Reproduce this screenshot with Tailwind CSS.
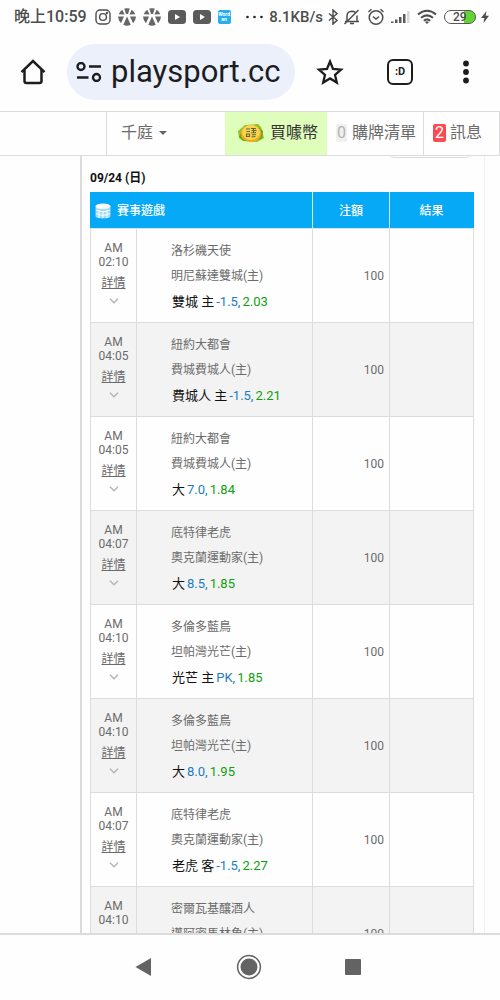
<!DOCTYPE html>
<html lang="zh-Hant">
  <head>
    <meta charset="UTF-8" />
    <meta name="viewport" content="width=device-width, initial-scale=1.0" />
    <title>playsport.cc</title>
    <script src="https://cdn.jsdelivr.net/npm/@tailwindcss/browser@4"></script>
  </head>
  <body
    class="flex flex-col h-screen overflow-hidden bg-[#fefefe] font-[Roboto,'Noto_Sans_CJK_TC',sans-serif] text-[#6b6b6b]"
  >
    <!-- Status bar -->
    <div class="flex items-center justify-between h-9 shrink-0 pl-[14px] pr-[11px] pb-[2px] text-[#4d4d4d] font-medium">
      <div class="flex items-center gap-[7px]">
        <span class="text-base leading-5">晚上10:59</span>
        <svg class="w-4 h-4 ml-px" viewBox="0 0 16 16" fill="none" stroke="currentColor" stroke-width="1.4">
          <rect x="1" y="1" width="14" height="14" rx="4" />
          <circle cx="8" cy="8" r="3.4" />
          <circle cx="12" cy="4" r="0.5" fill="currentColor" />
        </svg>
        <svg class="w-[18px] h-[18px]" viewBox="0 0 18 18" fill="#666">
          <path d="M6.2 .6Q9 -.2 11.800 .6L10 6H8zM4.300 1.700L6.600 6.400L.7 6.300Q1.800 3.300 4.300 1.700zM13.700 1.700L11.400 6.400L17.300 6.300Q16.200 3.300 13.700 1.700zM0 8.400L6 8.400L3 15.200Q.2 12.500 0 8.400zM18 8.400L12 8.400L15 15.200Q17.800 12.500 18 8.400zM9 8.400L12.700 16.800Q9 18.600 5.300 16.800z" />
        </svg>
        <svg class="w-[18px] h-[18px]" viewBox="0 0 18 18" fill="#666">
          <path d="M6.2 .6Q9 -.2 11.800 .6L10 6H8zM4.300 1.700L6.600 6.400L.7 6.300Q1.800 3.300 4.300 1.700zM13.700 1.700L11.400 6.400L17.300 6.300Q16.200 3.300 13.700 1.700zM0 8.400L6 8.400L3 15.200Q.2 12.500 0 8.400zM18 8.400L12 8.400L15 15.200Q17.800 12.500 18 8.400zM9 8.400L12.700 16.800Q9 18.600 5.300 16.800z" />
        </svg>
        <svg class="w-[18px] h-[14px]" viewBox="0 0 18 14">
          <rect width="18" height="14" rx="3.500" fill="#5b5b5b" />
          <path d="M7 4L12 7L7 10z" fill="#fff" />
        </svg>
        <svg class="w-[18px] h-[14px]" viewBox="0 0 18 14">
          <rect width="18" height="14" rx="3.500" fill="#5b5b5b" />
          <path d="M7 4L12 7L7 10z" fill="#fff" />
        </svg>
        <span class="flex flex-col items-center justify-center w-[13px] h-[14px] rounded-xs bg-[#28aef0] text-white text-[5px] leading-[5px] font-bold">
          <span>Word</span><span>an</span>
        </span>
      </div>
      <div class="flex items-center gap-[5px]">
        <svg class="w-[18px] h-4" viewBox="0 0 18 16" fill="#222">
          <circle cx="1.500" cy="8" r="1.300" /><circle cx="8.500" cy="8" r="1.300" /><circle cx="15.500" cy="8" r="1.300" />
        </svg>
        <span class="text-[15px] leading-5">8.1KB/s</span>
        <svg class="w-[10px] h-4" viewBox="0 0 10 16" fill="none" stroke="currentColor" stroke-width="1.500">
          <path d="M1 4.500L9 11.300L5 15V1L9 4.700L1 11.500" />
        </svg>
        <svg class="w-[18px] h-4" viewBox="0 0 18 16" fill="none" stroke="currentColor" stroke-width="1.500">
          <path d="M2 12.500H16M4 12V7Q4 2.500 9 2.300Q11 2.300 12.300 3.500M14 6.500V12M7 14.500H11M1.500 15L15.500 1" />
        </svg>
        <svg class="w-[18px] h-[18px] ml-px" viewBox="0 0 18 18" fill="none" stroke="currentColor" stroke-width="1.500">
          <circle cx="9" cy="9.500" r="6.800" />
          <path d="M6 8.500L9 11L12 8.500M1.500 4L4.500 1.300M16.500 4L13.500 1.300" />
        </svg>
        <svg class="w-[20px] h-4" viewBox="0 0 20 16">
          <path d="M1 14V12.500H3.500V14zM5 14V10.500H7.500V14zM9 14V8H11.500V14zM13 14V5H15.500V14z" fill="#5a5a5a" />
          <path d="M17 14V2H19.500V14z" fill="#d8d8d8" />
        </svg>
        <svg class="w-[20px] h-4 ml-[2px]" viewBox="0 0 20 16" fill="none" stroke="currentColor" stroke-width="2">
          <path d="M1 5.500Q10 -2 19 5.500M4 8.700Q10 4 16 8.700M6.800 11.700Q10 9.300 13.200 11.700" />
          <path d="M8 13L10 15L12 13Q10 11.500 8 13z" fill="currentColor" stroke="none" />
        </svg>
        <span class="flex items-center w-8 h-[14px] ml-[2px] rounded-full border border-[#555] bg-linear-to-r from-[#fefefe] from-65% to-[#5fd635] to-65% pl-2 text-xs leading-3">29</span>
        <svg class="w-2 h-4" viewBox="0 0 8 16" fill="currentColor">
          <path d="M5.500 2L0 9H3.300L2.500 14L8 6.800H4.700z" />
        </svg>
      </div>
    </div>

    <!-- Browser toolbar -->
    <div class="flex items-center h-[75px] shrink-0 pl-5 pr-[21px] pb-[3px] text-[#1d1d1f]">
      <button type="button" aria-label="Home" class="shrink-0">
        <svg class="block w-[26px] h-[26px]" viewBox="0 0 26 26" fill="none" stroke="currentColor" stroke-width="2.500">
          <path d="M1.500 13.200L13 2L24.500 13.200" />
          <path d="M4.500 11V22Q4.500 24 6.500 24H19.500Q21.500 24 21.500 22V11" />
        </svg>
      </button>
      <div class="flex items-center grow min-w-0 h-14 ml-[21px] mr-[21px] pl-[9px] pr-2 gap-[9px] rounded-full bg-[#ebf0fa]">
        <svg class="w-[26px] h-5 shrink-0" viewBox="0 0 26 20" fill="none" stroke="currentColor" stroke-width="2.400">
          <circle cx="5" cy="4.500" r="3.500" /><circle cx="20.500" cy="15.500" r="3.500" />
          <path d="M13 4.500H25M1 15.500H12.500" />
        </svg>
        <input
          type="text"
          aria-label="Address"
          value="playsport.cc"
          readonly
          class="w-full min-w-0 text-[31px] leading-10 outline-none"
        />
      </div>
      <button type="button" aria-label="Bookmark" class="shrink-0">
        <svg class="block w-7 h-[26px]" viewBox="0 0 28 26" fill="none" stroke="currentColor" stroke-width="2.300">
          <path d="M14 2.500L17 9.900L25 10.600L19 15.800L20.800 23.500L14 19.400L7.200 23.500L9 15.800L3 10.600L11 9.900z" />
        </svg>
      </button>
      <button
        type="button"
        aria-label="Tabs"
        class="shrink-0 w-[26px] h-[26px] ml-[43px] rounded-md border-2 border-current text-[11px] leading-5 font-bold"
      >
        :D
      </button>
      <button type="button" aria-label="Menu" class="shrink-0 ml-10">
        <svg class="block w-[26px] h-6" viewBox="0 0 26 24" fill="currentColor">
          <circle cx="13" cy="3.500" r="2.900" /><circle cx="13" cy="12" r="2.900" /><circle cx="13" cy="20.500" r="2.900" />
        </svg>
      </button>
    </div>

    <!-- Site navigation -->
    <nav class="flex h-[45px] shrink-0 border-y border-[#dcdcdc] pb-[2px] text-base leading-6">
      <a href="#" aria-label="首頁" class="w-[107px] -mb-[2px] border-r border-[#dcdcdc]"></a>
      <button type="button" class="flex items-center grow gap-[6px] pl-[14px]">
        千庭
        <svg class="w-2 h-1" viewBox="0 0 8 4" fill="#666"><path d="M0 0H8L4 4z" /></svg>
      </button>
      <a href="#" class="flex items-center gap-[5px] -mb-[2px] pb-[2px] pl-3 pr-[9px] bg-[#dffdbb] text-[#333]">
        <svg class="w-7 h-5" viewBox="0 0 28 20">
          <path d="M1 8L8 2L21 1L24 4L27 15L20 19L6 18L2 15z" fill="#8ac926" />
          <path d="M2 14L7 18L12 18L4 10zM20 3L26 8L25 15L22 17z" fill="#5fa514" />
          <ellipse cx="14" cy="10.500" rx="10.500" ry="8.500" fill="#f1a81d" />
          <ellipse cx="14" cy="9.500" rx="9" ry="7.500" fill="#fbd354" />
          <path d="M9 6H13M9.500 8.500H13M9 11H12.500V13.500H9.500V11M14 5.500H19M14.500 7.500H19.500M16.500 5V10M14 10L19 9.500M15 12L19 11.500M14.500 14L18.500 13.500" fill="none" stroke="#5e6b2c" stroke-width="1.200" />
        </svg>
        買噱幣
      </a>
      <a href="#" class="flex items-center gap-[5px] -mb-[2px] pb-[2px] pl-[9px] pr-[7px] border-r border-[#dcdcdc]">
        <span class="px-px h-[18px] rounded-xs bg-[#f0f0f0] text-[#b5b5b5] leading-[18px]">0</span>
        購牌清單
      </a>
      <a href="#" class="flex items-center gap-1 -mb-[2px] pb-[2px] pl-[9px] pr-[17px] border-r border-[#dcdcdc]">
        <span class="px-[2px] h-[18px] rounded-xs bg-[#fa4b50] text-white leading-[18px]">2</span>
        訊息
      </a>
    </nav>

    <!-- Page content -->
    <main class="flex grow min-h-0 overflow-y-auto [scrollbar-width:none]">
      <div class="w-[82px] shrink-0 h-max min-h-full self-stretch border-r-2 border-[#dcdcdc]"></div>
      <div class="relative grow h-max pl-2 pr-[10px] border-r border-[#f0f0f0]">
        <div class="absolute -top-[18px] right-3 w-[84px] h-5 rounded-md border border-[#dcdcdc]"></div>
        <h2 class="pt-3 pb-1 text-xs leading-5 font-bold text-[#111]">09/24 (日)</h2>
        <table class="w-full table-fixed border-collapse text-xs">
          <colgroup>
            <col class="w-[46px]" />
            <col />
            <col class="w-[77px]" />
            <col class="w-[84px]" />
          </colgroup>
          <thead>
            <tr class="h-9 bg-[#05a9f6] text-white">
              <th colspan="2" class="border border-[#d5e6ef] border-l-[#05a9f6] border-t-[#05a9f6] font-medium">
                <div class="flex items-center gap-[6px] pl-1">
                  <svg class="w-4 h-4" viewBox="0 0 16 16">
                    <path d="M.5 3V13Q.5 15.500 8 15.500T15.500 13V3z" fill="#9edcf8" />
                    <path d="M1 7Q8 10.500 15 7M1 10.500Q8 14 15 10.500M4 7V15M8 8V15M12 7V15" fill="none" stroke="#fff" stroke-width="1" />
                    <ellipse cx="8" cy="3.300" rx="7.500" ry="2.800" fill="#fff" />
                  </svg>
                  賽事遊戲
                </div>
              </th>
              <th class="border border-[#d5e6ef] border-t-[#05a9f6] font-medium">注額</th>
              <th class="border border-[#d5e6ef] border-t-[#05a9f6] border-r-[#05a9f6] font-medium">結果</th>
            </tr>
          </thead>
          <tbody id="games"></tbody>
        </table>
      </div>
      <div class="w-[15px] shrink-0"></div>
    </main>

    <!-- System navigation -->
    <div class="flex items-center justify-center gap-[79px] h-[67px] shrink-0 pr-[2px] pb-[2px] border-t-2 border-[#dcdcdc] text-[#636363]">
      <button type="button" aria-label="Back">
        <svg class="block w-[26px] h-[26px]" viewBox="0 0 26 26" fill="currentColor"><path d="M4.500 13L20 4V22z" /></svg>
      </button>
      <button type="button" aria-label="Home screen">
        <svg class="block w-[26px] h-[26px]" viewBox="0 0 26 26" fill="currentColor">
          <circle cx="13" cy="13" r="11.400" fill="none" stroke="currentColor" stroke-width="1.500" />
          <circle cx="13" cy="13" r="8.500" />
        </svg>
      </button>
      <button type="button" aria-label="Recent apps">
        <svg class="block w-[26px] h-[26px]" viewBox="0 0 26 26" fill="currentColor"><rect x="4" y="5" width="16" height="16" rx="1" /></svg>
      </button>
    </div>

    <script>
      var games = [
        ["02:10", "洛杉磯天使", "明尼蘇達雙城", "雙城 主", "-1.5", "2.03"],
        ["04:05", "紐約大都會", "費城費城人", "費城人 主", "-1.5", "2.21"],
        ["04:05", "紐約大都會", "費城費城人", "大", "7.0", "1.84"],
        ["04:07", "底特律老虎", "奧克蘭運動家", "大", "8.5", "1.85"],
        ["04:10", "多倫多藍鳥", "坦帕灣光芒", "光芒 主", "PK", "1.85"],
        ["04:10", "多倫多藍鳥", "坦帕灣光芒", "大", "8.0", "1.95"],
        ["04:07", "底特律老虎", "奧克蘭運動家", "老虎 客", "-1.5", "2.27"],
        ["04:10", "密爾瓦基釀酒人", "邁阿密馬林魚", "大", "7.5", "1.85"],
      ];

      document.getElementById("games").innerHTML = games
        .map(
          ([time, away, home, pick, line, odds]) => `
            <tr class="h-[94px] even:bg-[#f3f3f3]">
              <td class="border border-[#dcdcdc] pt-3 align-top text-center leading-[14px]">
                AM<br />${time}
                <a href="#" class="block mt-1 leading-5 underline">詳情</a>
                <svg class="w-[10px] h-[6px] mx-auto mt-[5px]" viewBox="0 0 10 6" fill="none" stroke="#b5b5b5" stroke-width="1.500">
                  <path d="M1 .8L5 4.800L9 .8" />
                </svg>
              </td>
              <td class="border border-[#dcdcdc] pt-[10px] pl-[34px] align-top leading-[25px]">
                <p>${away}</p>
                <p>${home}(主)</p>
                <p class="flex gap-[2px] pl-px text-[13px] text-[#111]">
                  <span>${pick}</span>
                  <span class="text-[#1a7dc0]">${line},</span>
                  <span class="text-[#0f9f0f]">${odds}</span>
                </p>
              </td>
              <td class="border border-[#dcdcdc] pr-[5px] text-right">100</td>
              <td class="border border-[#dcdcdc]"></td>
            </tr>`,
        )
        .join("");
    </script>
  </body>
</html>
